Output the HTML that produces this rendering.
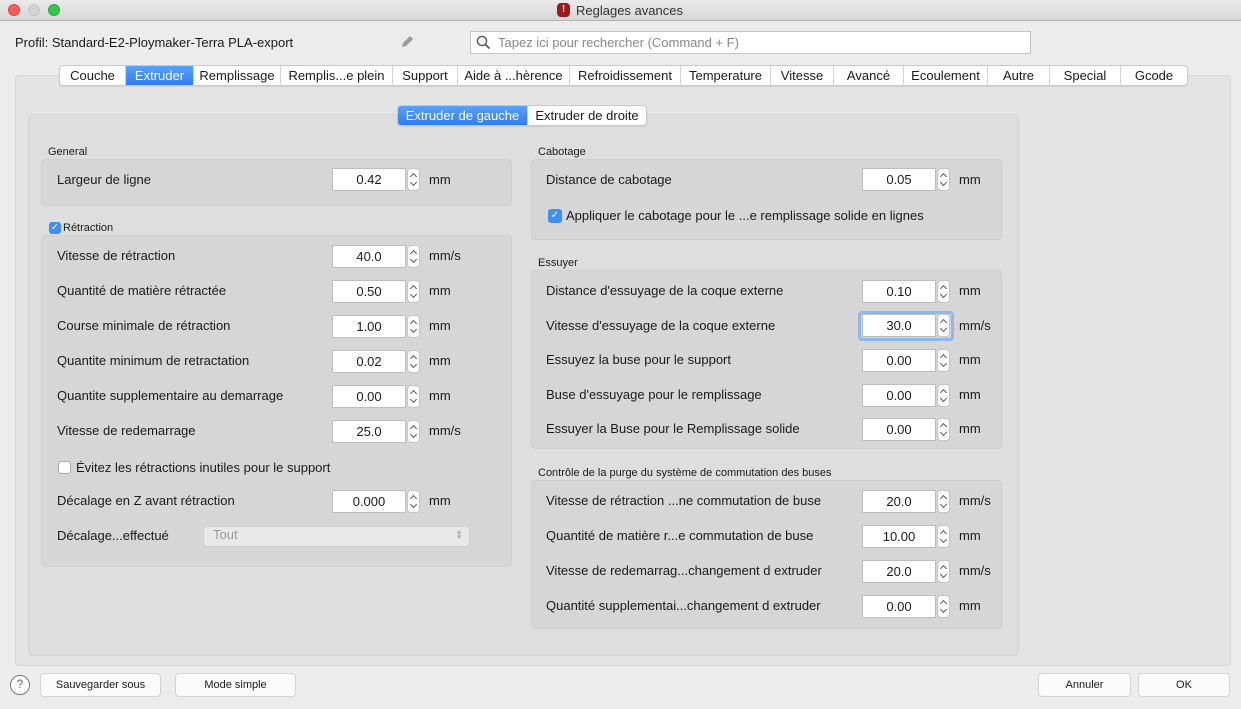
<!DOCTYPE html>
<html><head><meta charset="utf-8"><style>
*{box-sizing:border-box;margin:0;padding:0}
body{width:1241px;height:709px;background:#ececec;font-family:"Liberation Sans",sans-serif;font-size:13px;color:#1a1a1a;position:relative;overflow:hidden}
.a{position:absolute}
.t{position:absolute;line-height:16px;white-space:nowrap}
.title{left:0;top:0;width:1241px;height:21px;background:linear-gradient(#ebebeb,#d6d6d6);border-bottom:1px solid #b5b5b5}
.dot{position:absolute;top:4px;width:12px;height:12px;border-radius:50%}
.tabs{left:59px;top:65px;height:21px;display:flex;background:#fff;border:1px solid #c8c8c8;border-radius:4px;overflow:hidden;box-shadow:0 1px 1px rgba(0,0,0,.08)}
.tabs div{height:19px;line-height:19px;text-align:center;border-right:1px solid #d4d4d4;font-size:13px}
.tabs div:last-child{border-right:none}
.tabs .on{background:linear-gradient(#5aa1fa,#2f7df1);color:#fff}
.box{position:absolute;background:#d6d6d6;border-radius:4px;border:1px solid #d0d0d0}
.in{position:absolute;width:74px;height:23px;background:#fff;border:1px solid #bdbdbd;text-align:center;line-height:21px;font-size:13px}
.sp{position:absolute;width:13px;height:23px;background:#fff;border:1px solid #c4c4c4;border-radius:4px}
.sp:before{content:"";position:absolute;left:3px;top:5px;width:4px;height:4px;border-left:1px solid #555;border-top:1px solid #555;transform:rotate(45deg)}
.sp:after{content:"";position:absolute;left:3px;top:11px;width:4px;height:4px;border-right:1px solid #555;border-bottom:1px solid #555;transform:rotate(45deg)}
.sm{font-size:11px}
.btn{position:absolute;height:24px;background:#fafafa;border:1px solid #d3d3d3;border-radius:4px;text-align:center;line-height:22px;font-size:11px}
.cb{position:absolute;width:12px;height:12px;border-radius:3px;background:#3d8ef5;color:#fff;font-size:10px;line-height:12px;text-align:center}
</style></head><body>
<div class="a title"></div>
<div class="dot" style="left:8px;background:#fc5f57;border:1px solid #e0443e"></div>
<div class="dot" style="left:28px;background:#d3d3d3;border:1px solid #c4c4c4"></div>
<div class="dot" style="left:48px;background:#34c84a;border:1px solid #29a83b"></div>
<div class="a" style="left:557px;top:3px;width:13px;height:14px;background:#9d1a1a;border-radius:4px;color:#fff;font-size:10px;text-align:center;line-height:14px;font-weight:bold">!</div>
<div class="t" style="left:576px;top:3px;color:#333">Reglages avances</div>

<div class="t" style="left:15px;top:35px">Profil: Standard-E2-Ploymaker-Terra PLA-export</div>
<svg class="a" style="left:399px;top:34px" width="16" height="16" viewBox="0 0 16 16"><path d="M3 13l1-4 7-7 3 3-7 7z" fill="#9a9a9a"/></svg>
<div class="a" style="left:470px;top:31px;width:561px;height:23px;background:#fff;border:1px solid #c6c6c6"></div>
<svg class="a" style="left:476px;top:35px" width="15" height="15" viewBox="0 0 15 15"><circle cx="6" cy="6" r="4.6" fill="none" stroke="#555" stroke-width="1.4"/><path d="M9.5 9.5l4 4" stroke="#555" stroke-width="1.6"/></svg>
<div class="t" style="left:498px;top:35px;color:#888">Tapez ici pour rechercher (Command + F)</div>

<div class="a" style="left:15px;top:75px;width:1216px;height:591px;background:#e4e4e4;border:1px solid #d6d6d6;border-radius:4px"></div>
<div class="a tabs">
<div style="width:66px">Couche</div><div class="on" style="width:68px">Extruder</div><div style="width:87px">Remplissage</div><div style="width:112px">Remplis...e plein</div><div style="width:65px">Support</div><div style="width:112px">Aide à ...hèrence</div><div style="width:111px">Refroidissement</div><div style="width:90px">Temperature</div><div style="width:63px">Vitesse</div><div style="width:70px">Avancé</div><div style="width:84px">Ecoulement</div><div style="width:62px">Autre</div><div style="width:71px">Special</div><div style="width:66px">Gcode</div>
</div>

<div class="a" style="left:28px;top:114px;width:991px;height:542px;background:#dedede;border:1px solid #d4d4d4;border-radius:4px"></div>
<div class="a tabs" style="left:397px;top:105px">
<div class="on" style="width:130px">Extruder de gauche</div><div style="width:118px">Extruder de droite</div>
</div>

<!-- left -->
<div class="t sm" style="left:48px;top:144px">General</div>
<div class="box" style="left:41px;top:159px;width:471px;height:47px"></div>
<div class="t" style="left:57px;top:172px">Largeur de ligne</div>
<div class="in" style="left:332px;top:168px">0.42</div><div class="sp" style="left:407px;top:168px"></div><div class="t" style="left:429px;top:172px">mm</div>

<div class="cb" style="left:49px;top:222px">✓</div>
<div class="t sm" style="left:63px;top:220px">Rétraction</div>
<div class="box" style="left:41px;top:235px;width:471px;height:332px"></div>
<div class="t" style="left:57px;top:248px">Vitesse de rétraction</div>
<div class="in" style="left:332px;top:245px">40.0</div><div class="sp" style="left:407px;top:245px"></div><div class="t" style="left:429px;top:248px">mm/s</div>
<div class="t" style="left:57px;top:283px">Quantité de matière rétractée</div>
<div class="in" style="left:332px;top:280px">0.50</div><div class="sp" style="left:407px;top:280px"></div><div class="t" style="left:429px;top:283px">mm</div>
<div class="t" style="left:57px;top:318px">Course minimale de rétraction</div>
<div class="in" style="left:332px;top:315px">1.00</div><div class="sp" style="left:407px;top:315px"></div><div class="t" style="left:429px;top:318px">mm</div>
<div class="t" style="left:57px;top:353px">Quantite minimum de retractation</div>
<div class="in" style="left:332px;top:350px">0.02</div><div class="sp" style="left:407px;top:350px"></div><div class="t" style="left:429px;top:353px">mm</div>
<div class="t" style="left:57px;top:388px">Quantite supplementaire au demarrage</div>
<div class="in" style="left:332px;top:385px">0.00</div><div class="sp" style="left:407px;top:385px"></div><div class="t" style="left:429px;top:388px">mm</div>
<div class="t" style="left:57px;top:423px">Vitesse de redemarrage</div>
<div class="in" style="left:332px;top:420px">25.0</div><div class="sp" style="left:407px;top:420px"></div><div class="t" style="left:429px;top:423px">mm/s</div>
<div class="a" style="left:58px;top:461px;width:13px;height:13px;background:#fff;border:1px solid #aaa;border-radius:3px"></div>
<div class="t" style="left:76px;top:460px">Évitez les rétractions inutiles pour le support</div>
<div class="t" style="left:57px;top:493px">Décalage en Z avant rétraction</div>
<div class="in" style="left:332px;top:490px">0.000</div><div class="sp" style="left:407px;top:490px"></div><div class="t" style="left:429px;top:493px">mm</div>
<div class="t" style="left:57px;top:528px">Décalage...effectué</div>
<div class="a" style="left:203px;top:526px;width:267px;height:21px;background:#e8e8e8;border:1px solid #cfcfcf;border-radius:4px"></div>
<div class="t" style="left:213px;top:527px;color:#999">Tout</div>
<div class="t" style="left:455px;top:528px;color:#999;font-size:10px">⇕</div>

<!-- right -->
<div class="t sm" style="left:538px;top:144px">Cabotage</div>
<div class="box" style="left:531px;top:159px;width:471px;height:81px"></div>
<div class="t" style="left:546px;top:172px">Distance de cabotage</div>
<div class="in" style="left:862px;top:168px">0.05</div><div class="sp" style="left:937px;top:168px"></div><div class="t" style="left:959px;top:172px">mm</div>
<div class="cb" style="left:548px;top:209px;width:14px;height:14px;line-height:14px">✓</div>
<div class="t" style="left:566px;top:208px">Appliquer le cabotage pour le ...e remplissage solide en lignes</div>

<div class="t sm" style="left:538px;top:255px">Essuyer</div>
<div class="box" style="left:531px;top:270px;width:471px;height:179px"></div>
<div class="t" style="left:546px;top:283px">Distance d'essuyage de la coque externe</div>
<div class="in" style="left:862px;top:280px">0.10</div><div class="sp" style="left:937px;top:280px"></div><div class="t" style="left:959px;top:283px">mm</div>
<div class="t" style="left:546px;top:318px">Vitesse d'essuyage de la coque externe</div>
<div class="a" style="left:858px;top:311px;width:96px;height:30px;border:3px solid #8fb7ec;border-radius:4px"></div>
<div class="in" style="left:862px;top:314px">30.0</div><div class="sp" style="left:937px;top:314px"></div><div class="t" style="left:959px;top:318px">mm/s</div>
<div class="t" style="left:546px;top:352px">Essuyez la buse pour le support</div>
<div class="in" style="left:862px;top:349px">0.00</div><div class="sp" style="left:937px;top:349px"></div><div class="t" style="left:959px;top:352px">mm</div>
<div class="t" style="left:546px;top:387px">Buse d'essuyage pour le remplissage</div>
<div class="in" style="left:862px;top:384px">0.00</div><div class="sp" style="left:937px;top:384px"></div><div class="t" style="left:959px;top:387px">mm</div>
<div class="t" style="left:546px;top:421px">Essuyer la Buse pour le Remplissage solide</div>
<div class="in" style="left:862px;top:418px">0.00</div><div class="sp" style="left:937px;top:418px"></div><div class="t" style="left:959px;top:421px">mm</div>

<div class="t sm" style="left:538px;top:465px">Contrôle de la purge du système de commutation des buses</div>
<div class="box" style="left:531px;top:480px;width:471px;height:149px"></div>
<div class="t" style="left:546px;top:493px">Vitesse de rétraction ...ne commutation de buse</div>
<div class="in" style="left:862px;top:490px">20.0</div><div class="sp" style="left:937px;top:490px"></div><div class="t" style="left:959px;top:493px">mm/s</div>
<div class="t" style="left:546px;top:528px">Quantité de matière r...e commutation de buse</div>
<div class="in" style="left:862px;top:525px">10.00</div><div class="sp" style="left:937px;top:525px"></div><div class="t" style="left:959px;top:528px">mm</div>
<div class="t" style="left:546px;top:563px">Vitesse de redemarrag...changement d extruder</div>
<div class="in" style="left:862px;top:560px">20.0</div><div class="sp" style="left:937px;top:560px"></div><div class="t" style="left:959px;top:563px">mm/s</div>
<div class="t" style="left:546px;top:598px">Quantité supplementai...changement d extruder</div>
<div class="in" style="left:862px;top:595px">0.00</div><div class="sp" style="left:937px;top:595px"></div><div class="t" style="left:959px;top:598px">mm</div>

<!-- bottom -->
<div class="a" style="left:10px;top:675px;width:20px;height:20px;border:1.5px solid #777;border-radius:50%;text-align:center;line-height:17px;font-size:12px;color:#666;background:#fff">?</div>
<div class="btn" style="left:40px;top:673px;width:121px">Sauvegarder sous</div>
<div class="btn" style="left:175px;top:673px;width:121px">Mode simple</div>
<div class="btn" style="left:1038px;top:673px;width:93px">Annuler</div>
<div class="btn" style="left:1138px;top:673px;width:92px">OK</div>
</body></html>
